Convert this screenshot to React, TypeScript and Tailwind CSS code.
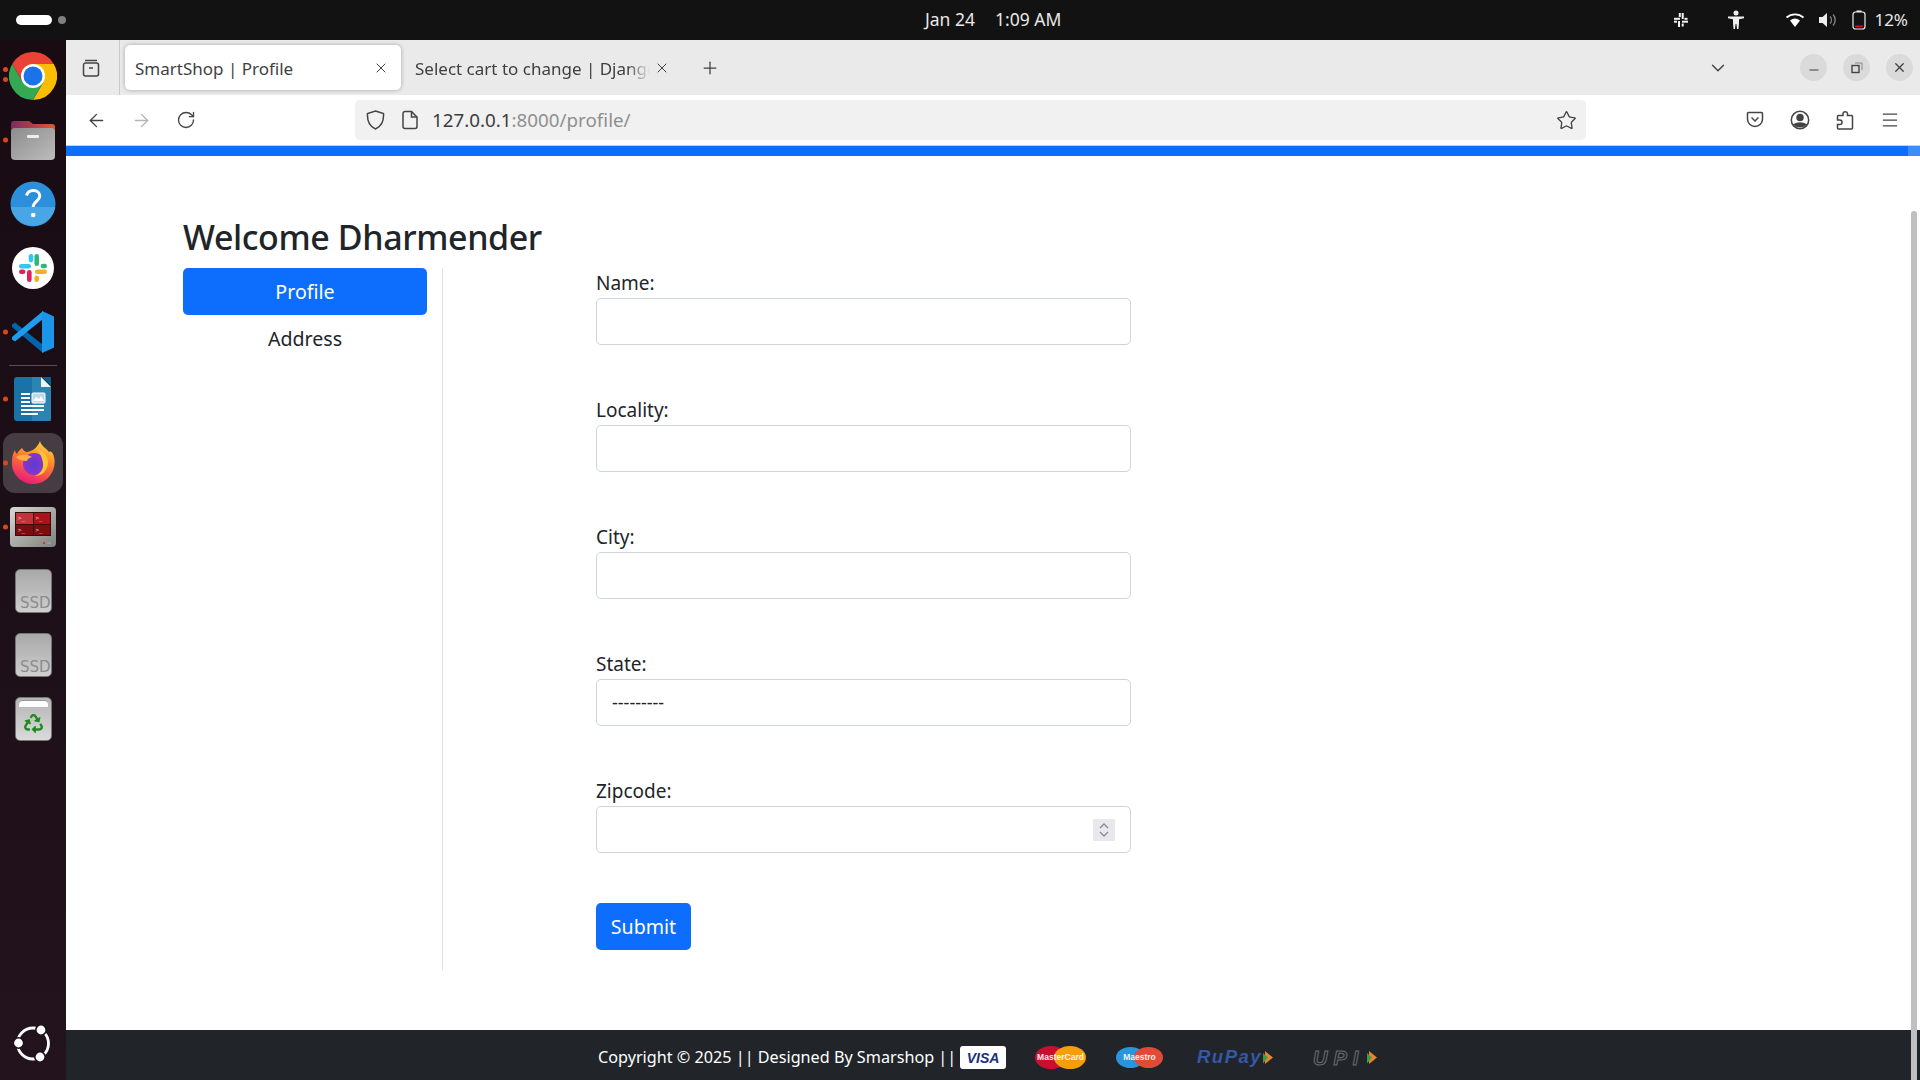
import React from "react";
import { ArrowLeft, ArrowRight, RotateCw, Star, X, Plus, ChevronDown, Minus, Menu } from "lucide-react";
import { FaRecycle } from "react-icons/fa";

const Dot = ({ y = "top-1/2" }: { y?: string }) => (
  <span className={`absolute left-[3px] ${y} -translate-y-1/2 w-[5px] h-[5px] rounded-full bg-[#d9481c]`} />
);

const Chrome = () => (
  <svg width="48" height="48" viewBox="0 0 48 48">
    <path d="M3.2 12A24 24 0 0 1 44.8 12L24 12L13.6 30Z" fill="#ea4335" />
    <path d="M44.8 12A24 24 0 0 1 24 48L34.4 30L24 12Z" fill="#fbbc04" />
    <path d="M24 48A24 24 0 0 1 3.2 12L13.6 30L34.4 30Z" fill="#34a853" />
    <circle cx="24" cy="24" r="12" fill="#fff" />
    <circle cx="24" cy="24" r="9.5" fill="#1a73e8" />
  </svg>
);
const Files = () => (
  <svg width="46" height="42" viewBox="0 0 46 42">
    <defs>
      <linearGradient id="ff" x1="0" x2="1"><stop offset="0" stopColor="#7d2a63" /><stop offset="1" stopColor="#e2582a" /></linearGradient>
      <linearGradient id="fg" x1="0" y1="0" x2="1" y2="1"><stop offset="0" stopColor="#8c8c8c" /><stop offset="1" stopColor="#bdbdbd" /></linearGradient>
    </defs>
    <path d="M1 5a3 3 0 0 1 3-3h15l4 3h19a3 3 0 0 1 3 3v14H1Z" fill="url(#ff)" />
    <rect x="1" y="9" width="44" height="32" rx="4" fill="url(#fg)" />
    <rect x="17" y="16" width="12" height="3" rx="1" fill="#eee" />
  </svg>
);
const Help = () => (
  <svg width="46" height="46" viewBox="0 0 46 46">
    <circle cx="23" cy="23" r="22.5" fill="#2b8fdc" />
    <path d="M.8 26h44.4A22.5 22.5 0 0 1 .8 26Z" fill="#49a6e6" />
    <path d="M16.5 14.5c1-3.5 3.6-5 6.7-5 4 0 6.6 2.3 6.6 5.6 0 5-6.6 5.2-6.6 11" fill="none" stroke="#fff" strokeWidth="3" />
    <circle cx="23.2" cy="34" r="2.3" fill="#fff" />
  </svg>
);
const SlackMark = ({ s = 28 }: { s?: number }) => {
  const c = ["#36c5f0", "#2eb67d", "#ecb22e", "#e01e5a"];
  return (
    <svg width={s} height={s} viewBox="0 0 28 28">
      <rect x="0" y="10" width="12" height="4.6" rx="2.3" fill={c[0]} />
      <rect x="9.7" y="0" width="4.6" height="8.4" rx="2.3" fill={c[0]} />
      <rect x="15.4" y="0" width="4.6" height="12" rx="2.3" fill={c[1]} />
      <rect x="21.6" y="9.7" width="6.4" height="4.6" rx="2.3" fill={c[1]} />
      <rect x="16" y="15.4" width="12" height="4.6" rx="2.3" fill={c[2]} />
      <rect x="15.4" y="21.6" width="4.6" height="6.4" rx="2.3" fill={c[2]} />
      <rect x="8" y="16" width="4.6" height="12" rx="2.3" fill={c[3]} />
      <rect x="0" y="15.4" width="6.4" height="4.6" rx="2.3" fill={c[3]} />
    </svg>
  );
};
const SlackMono = () => (
  <svg width="14" height="14" viewBox="0 0 14 14" fill="#f2f2f2">
    <rect x="0" y="4.8" width="6" height="2" /><rect x="4.8" y="0" width="2" height="4" />
    <rect x="7.700" y="0" width="2" height="6" /><rect x="10.500" y="4.800" width="3" height="2" />
    <rect x="8" y="7.700" width="6" height="2" /><rect x="7.700" y="10.500" width="2" height="3" />
    <rect x="4" y="8" width="2" height="6" /><rect x="0" y="7.700" width="3" height="2" />
  </svg>
);
const VSCode = () => (
  <svg width="44" height="44" viewBox="0 0 44 44">
    <path d="M1 14.500 4 12.500 32 35V43L1 17Z" fill="#0065a9" />
    <path d="M1 29.500 4 31.500 32 9V1L1 27Z" fill="#1f9cf0" />
    <path d="M31 1 43 6.500V37.500L31 43Z" fill="#1f9cf0" />
    <path d="M31 1 43 6.500V37.500L31 43Z" fill="#0a7fd0" opacity="0.25" />
  </svg>
);
const Writer = () => (
  <svg width="38" height="46" viewBox="0 0 38 46">
    <path d="M3 1h24l10 10v31a3 3 0 0 1-3 3H3a3 3 0 0 1-3-3V4a3 3 0 0 1 3-3Z" fill="#1a73a4" />
    <path d="M18 1h9l10 10v34H18Z" fill="#3a8fbd" opacity=".6" />
    <path d="M28 1l9 0v9Z" fill="#0e5d86" />
    <path d="M27 1l10 10H27Z" fill="#fff" opacity=".9" />
    <g fill="#fff">
      <rect x="7" y="17" width="9" height="2" /><rect x="7" y="21" width="9" height="2" /><rect x="7" y="25" width="9" height="2" />
      <rect x="7" y="29" width="23" height="2" /><rect x="7" y="33" width="23" height="2" /><rect x="7" y="37" width="17" height="2" />
    </g>
    <rect x="18" y="17" width="13" height="10" rx="1" fill="#bcd9ea" stroke="#fff" strokeWidth="1" />
    <path d="M19 25l3-4 3 2 2-3 3 5Z" fill="#fff" />
  </svg>
);
const Firefox = () => (
  <svg width="44" height="44" viewBox="0 0 44 44">
    <defs>
      <linearGradient id="fx" x1="0.7" y1="0" x2="0.3" y2="1"><stop offset="0" stopColor="#ffd43a" /><stop offset=".45" stopColor="#ff7a2e" /><stop offset="1" stopColor="#e8167c" /></linearGradient>
      <radialGradient id="fxb"><stop offset="0" stopColor="#5b3bd6" /><stop offset="1" stopColor="#8a35c7" /></radialGradient>
    </defs>
    <path d="M29 0c1 5 6 7 9 11 2-1 3 0 4 2 3 7 2 16-4 23-6 7-17 9-25 5C5 37 0 29 1 20c0-4 1-8 3-11 0 2 1 3 2 4 1-3 3-4 5-6 1 2 3 4 5 4 6-1 11-5 13-11Z" fill="url(#fx)" />
    <circle cx="23" cy="23" r="11" fill="url(#fxb)" />
    <path d="M5 16c5-3 11-3 16 0-3 1-5 2-5 4-4 0-8-1-11-4Z" fill="#ffb03a" />
    <path d="M26 8c7 2 12 8 11 15-1 7-6 12-13 12 5-2 9-7 8-13-1-6-3-10-6-14Z" fill="#ffc42e" />
  </svg>
);
const Pane = ({ tone }: { tone: string }) => (
  <div className={`${tone} flex flex-col justify-center pl-[2px] gap-[1px]`}>
    <span className="text-[6px] leading-[6px] text-white/80 font-['DejaVu_Sans_Mono',monospace]">&gt;_</span>
  </div>
);
const Terminal = () => (
  <div className="relative w-[46px] h-[40px] rounded-[4px] bg-gradient-to-br from-[#d8d8d4] to-[#7f827c] p-[5px] pb-[11px]">
    <div className="h-full bg-[#3a0a0c] grid grid-cols-2 grid-rows-2 gap-px p-px">
      <Pane tone="bg-[#c0343c]" /><Pane tone="bg-[#a8141a]" /><Pane tone="bg-[#7c0c10]" /><Pane tone="bg-[#7c0c10]" />
    </div>
    <span className="absolute right-[11px] bottom-[3px] w-[2px] h-[2px] bg-[#ff2020]" />
    <span className="absolute right-[5px] bottom-[3px] w-[4px] h-[2px] bg-[#9a9a96]" />
  </div>
);
const SSD = () => (
  <div className="relative w-[37px] h-[44px] rounded-[5px] bg-gradient-to-b from-[#a8a8a8] to-[#cfcfcf] border border-[#777] overflow-hidden">
    <span className="absolute right-0 bottom-[1px] text-[15px] leading-[16px] text-[#8c8c8c] font-['DejaVu_Sans',sans-serif]">SSD</span>
  </div>
);
const Trash = () => (
  <div className="relative w-[37px] h-[44px] rounded-[5px] bg-gradient-to-b from-[#b5b5b5] to-[#dadada] border border-[#777] flex items-center justify-center pt-[9px]">
    <span className="absolute top-[2px] left-[3px] right-[3px] h-[7px] rounded-t-[4px] bg-white border-t border-[#999]" />
    <FaRecycle size={19} color="#1f8a1f" />
  </div>
);
const Ubuntu = () => (
  <svg width="40" height="40" viewBox="0 0 40 40" fill="none">
    <circle cx="20" cy="19.500" r="15.500" stroke="#fff" strokeWidth="2.800" />
    <circle cx="5.500" cy="19" r="5.200" fill="#fff" stroke="#1d1018" strokeWidth="1.600" />
    <circle cx="28" cy="6" r="5.200" fill="#fff" stroke="#1d1018" strokeWidth="1.600" />
    <circle cx="27" cy="33" r="5.200" fill="#fff" stroke="#1d1018" strokeWidth="1.600" />
  </svg>
);

const DockItem = ({ children, dot, active, y }: { children: React.ReactNode; dot?: boolean; active?: boolean; y?: string }) => (
  <div className="relative h-[64px] w-[66px] flex items-center justify-center shrink-0">
    {active && <span className="absolute left-[3px] top-[2px] w-[60px] h-[60px] rounded-[12px] bg-[#453d42]" />}
    <span className="relative flex">{children}</span>
    {dot && <Dot y={y} />}
  </div>
);

const Field = ({ label, children }: { label: string; children: React.ReactNode }) => (
  <div className="mb-[50px]">
    <label className="block h-[30px] leading-[30px] text-[19px] text-[#212529]">{label}</label>
    {children}
  </div>
);
const inputCls = "block w-[535px] h-[47px] bg-white border border-[#ced4da] rounded-[5px] px-[15px] text-[18px] text-[#212529] outline-none";

const Visa = () => (
  <span className="w-[46px] h-[23px] bg-white rounded-[3px] flex items-center justify-center">
    <span className="text-[14px] leading-none font-bold italic text-[#1a2f7a] font-['Liberation_Sans',sans-serif]">VISA</span>
  </span>
);
const MC = ({ a, b, w, label, s, t }: { a: string; b: string; w: string; label: string; s: string; t: string }) => (
  <span className={`relative ${w} h-[24px] flex items-center`}>
    <span className={`absolute left-0 ${s} rounded-[50%]`} style={{ backgroundColor: a }} />
    <span className={`absolute right-0 ${s} rounded-[50%]`} style={{ backgroundColor: b }} />
    <span className={`absolute inset-0 flex items-center justify-center ${t} leading-none font-bold text-white/90 font-['Liberation_Sans',sans-serif] whitespace-nowrap overflow-hidden`}>{label}</span>
  </span>
);
const Arrow = () => (
  <svg width="12" height="15" viewBox="0 0 12 15" className="shrink-0">
    <path d="M3 1l8 6.500-8 6.500Z" fill="#e8842a" /><path d="M1 3l5 4.500-5 6Z" fill="#3f9a4a" />
  </svg>
);

export default function App() {
  return (
    <div className="w-[1920px] h-[1080px] overflow-hidden flex flex-col bg-white font-['Noto_Sans',sans-serif]">
      {/* system bar */}
      <header className="h-[40px] shrink-0 bg-[#121212] flex items-center pl-[16px] pr-[12px] text-white">
        <span className="w-[36px] h-[10px] rounded-full bg-white" />
        <span className="ml-[6px] w-[8px] h-[8px] rounded-full bg-[#808080]" />
        <div className="ml-[859px] -mt-px flex gap-[20px] text-[17.500px] text-[#e8e8e8]">
          <span>Jan 24</span>
          <span>1:09 AM</span>
        </div>
        <div className="ml-auto flex items-center">
          <SlackMono />
          <svg className="ml-[39px]" width="18" height="20" viewBox="0 0 18 20" fill="#eee">
            <circle cx="9" cy="3" r="2.500" /><path d="M1 6.500h16v1.800l-5 1V13l-.5 6H10l-.6-5h-.8L8 19H6.500L6 13V9.300l-5-1Z" />
          </svg>
          <svg className="ml-[40px]" width="20" height="16" viewBox="0 0 20 16" fill="none">
            <path d="M10 15 5 8.500a8 8 0 0 1 10 0Z" fill="#fff" /><path d="M1.500 5.500a13 13 0 0 1 17 0" stroke="#fff" strokeWidth="1.800" />
          </svg>
          <svg className="ml-[13px]" width="20" height="16" viewBox="0 0 20 16" fill="none">
            <path d="M1 5h3.500L9 1v14l-4.500-4H1Z" fill="#eee" /><path d="M12 4.500a5 5 0 0 1 0 7M15 2.500a8 8 0 0 1 0 11" stroke="#888" strokeWidth="1.300" />
          </svg>
          <svg className="ml-[14px]" width="14" height="20" viewBox="0 0 14 20" fill="none">
            <rect x="1" y="2" width="12" height="17" rx="2.500" stroke="#eee" strokeWidth="1.200" /><rect x="4.500" y="0.500" width="5" height="1.500" fill="#eee" /><rect x="3" y="15.500" width="8" height="1.600" fill="#d01010" />
          </svg>
          <span className="ml-[8px] -mt-px text-[17px] text-[#e8e8e8]">12%</span>
        </div>
      </header>

      <div className="flex-1 flex min-h-0">
        {/* dock */}
        <aside className="w-[66px] shrink-0 bg-gradient-to-b from-[#180b12] to-[#22131c] flex flex-col pt-[4px]">
          <div className="relative">
            <DockItem><Chrome /></DockItem>
            <span className="absolute left-[3px] top-[23px] w-[5px] h-[5px] rounded-full bg-[#d9481c]" />
            <span className="absolute left-[3px] top-[33px] w-[5px] h-[5px] rounded-full bg-[#d9481c]" />
          </div>
          <DockItem dot><Files /></DockItem>
          <DockItem><Help /></DockItem>
          <DockItem><SlackBadge /></DockItem>
          <DockItem dot><VSCode /></DockItem>
          <div className="mx-[9px] h-px my-px bg-[#5a4f55]" />
          <DockItem dot><Writer /></DockItem>
          <DockItem dot active><Firefox /></DockItem>
          <DockItem dot><Terminal /></DockItem>
          <DockItem><SSD /></DockItem>
          <DockItem><SSD /></DockItem>
          <DockItem><Trash /></DockItem>
          <div className="mt-auto mb-[4px]"><DockItem><Ubuntu /></DockItem></div>
        </aside>

        {/* browser */}
        <main className="relative flex-1 min-w-0 flex flex-col">
          {/* tab strip */}
          <div className="h-[55px] shrink-0 bg-[#eaeaea] flex items-center text-[#3f3f3f]">
            <div className="w-[54px] h-full border-r border-[#c9c9c9] flex items-center justify-center pr-[4px]">
              <svg width="20" height="20" viewBox="0 0 20 20" fill="none" stroke="#444" strokeWidth="1.500">
                <path d="M4 2.500h12" /><path d="M2.500 7a2 2 0 0 1 2-2h11a2 2 0 0 1 2 2v9a2 2 0 0 1-2 2h-11a2 2 0 0 1-2-2Z" /><path d="M8 10h4" />
              </svg>
            </div>
            <div className="ml-[5px] w-[276px] h-[45px] bg-white rounded-[5px] shadow-[0_0_4px_rgba(0,0,0,0.3)] flex items-center pl-[10px] pr-[12px]">
              <span className="text-[17px] mt-[2px] truncate">SmartShop | Profile</span>
              <X className="ml-auto" size={16} strokeWidth={1.500} />
            </div>
            <div className="ml-[14px] w-[235px] mt-[2px] overflow-hidden whitespace-nowrap text-[17px] [mask-image:linear-gradient(to_right,black_90%,transparent)]">
              Select cart to change | Django site admin
            </div>
            <X className="ml-[4px]" size={16} strokeWidth={1.500} />
            <Plus className="ml-[30px]" size={20} strokeWidth={1.500} />
            <ChevronDown className="ml-[987px]" size={22} strokeWidth={1.500} />
            <button className="ml-[71px] w-[27px] h-[27px] rounded-full bg-[#dadada] flex items-center justify-center"><Minus size={14} className="mt-[4px]" /></button>
            <button className="ml-[16px] w-[27px] h-[27px] rounded-full bg-[#dadada] flex items-center justify-center">
              <svg width="12" height="12" viewBox="0 0 12 12" fill="none" stroke="#444"><rect x="1" y="3.500" width="7" height="7" strokeWidth="1.400" /><path d="M4 1h7v7" stroke="#888" /></svg>
            </button>
            <button className="ml-[16px] w-[27px] h-[27px] rounded-full bg-[#dadada] flex items-center justify-center"><X size={15} strokeWidth={2} /></button>
          </div>

          {/* toolbar */}
          <div className="h-[51px] shrink-0 bg-white flex items-center text-[#444] border-b border-[#d0d0d0]">
            <ArrowLeft className="ml-[20px]" size={21} strokeWidth={1.600} />
            <ArrowRight className="ml-[24px] text-[#b5b5b5]" size={21} strokeWidth={1.600} />
            <RotateCw className="ml-[24px]" size={20} strokeWidth={1.600} />
            <div className="ml-[159px] w-[1231px] h-[40px] bg-[#f1f1f1] rounded-[5px] flex items-center pl-[11px] pr-[9px]">
              <svg width="19" height="20" viewBox="0 0 19 20" fill="none" stroke="#444" strokeWidth="1.500"><path d="M9.500 1 17.500 3.500c.5 8-2 13-8 15.500-6-2.500-8.500-7.500-8-15.500Z" /></svg>
              <svg className="ml-[17px]" width="16" height="20" viewBox="0 0 16 20" fill="none" stroke="#444" strokeWidth="1.500"><path d="M3 1.500h6.500L15 7v9.500a2 2 0 0 1-2 2H3a2 2 0 0 1-2-2v-13a2 2 0 0 1 2-2Z" /><path d="M9.500 1.500V7H15" /></svg>
              <span className="ml-[14px] text-[18.800px] text-[#3d3d3d]">127.0.0.1<span className="text-[#8f8f8f]">:8000/profile/</span></span>
              <Star className="ml-auto" size={21} strokeWidth={1.500} />
            </div>
            <svg className="ml-[160px]" width="18" height="18" viewBox="0 0 18 18" fill="none" stroke="#444" strokeWidth="1.500"><path d="M2.500 1.500h13a1 1 0 0 1 1 1V8a7.500 7.500 0 0 1-15 0V2.500a1 1 0 0 1 1-1Z" /><path d="M5.500 6.500 9 10l3.500-3.500" /></svg>
            <svg className="ml-[26px]" width="20" height="20" viewBox="0 0 20 20" fill="none" stroke="#444" strokeWidth="1.500"><circle cx="10" cy="10" r="8.700" /><circle cx="10" cy="7.500" r="3" fill="#444" /><path d="M4 14.500c3-2 9-2 12 0-3 3-9 3-12 0Z" fill="#444" /></svg>
            <svg className="ml-[26px]" width="18" height="20" viewBox="0 0 18 20" fill="none" stroke="#444" strokeWidth="1.500"><path d="M7 5.500V3.500a2.300 2.300 0 0 1 4.500 0v2h4a1 1 0 0 1 1 1V18a1 1 0 0 1-1 1H2.500a1 1 0 0 1-1-1v-3.500h2.300a2 2 0 0 0 0-4.500H1.500V6.500a1 1 0 0 1 1-1Z" /></svg>
            <Menu className="ml-[26px]" size={20} strokeWidth={1.500} />
          </div>

          {/* page */}
          <div className="h-[10px] shrink-0 bg-[#0d6efd]" />
          <div className="flex-1 min-h-0 pl-[117px] pt-[58px] flex flex-col">
            <h2 className="text-[34px] leading-[46px] tracking-[-0.4px] text-[#212529] font-medium mb-[8px]">Welcome Dharmender</h2>
            <div className="flex">
              <nav className="w-[260px] border-r border-[#dee2e6] pr-[15px] h-[702px] shrink-0">
                <a className="block h-[47px] leading-[47px] rounded-[5px] bg-[#0d6efd] text-white text-center text-[19.6px]">Profile</a>
                <a className="block h-[47px] leading-[47px] text-[#212529] text-center text-[19.6px]">Address</a>
              </nav>
              <form className="ml-[153px]">
                <Field label="Name:"><input className={inputCls} /></Field>
                <Field label="Locality:"><input className={inputCls} /></Field>
                <Field label="City:"><input className={inputCls} /></Field>
                <Field label="State:">
                  <select className={inputCls + " appearance-none"}><option>---------</option></select>
                </Field>
                <Field label="Zipcode:">
                  <div className="relative w-[535px]">
                    <input className={inputCls} />
                    <span className="absolute right-[16px] top-[13px] w-[22px] h-[22px] bg-[#e9e9ed] flex flex-col items-center justify-center text-[#8a8a8a]">
                      <svg width="12" height="16" viewBox="0 0 12 16" fill="none" stroke="currentColor" strokeWidth="1.300"><path d="M2 6l4-4 4 4M2 10l4 4 4-4" /></svg>
                    </span>
                  </div>
                </Field>
                <button type="button" className="block w-[95px] h-[47px] rounded-[5px] bg-[#0d6efd] text-white text-[19.6px]">Submit</button>
              </form>
            </div>
          </div>

          {/* footer */}
          <footer className="h-[50px] shrink-0 bg-[#212529] flex items-center pl-[532px] pt-[5px] text-white">
            <span className="text-[16.200px] whitespace-nowrap w-[362px]">Copyright © 2025 || Designed By Smarshop ||</span>
            <Visa />
            <span className="ml-[29px] flex"><MC a="#c8102e" b="#f59e0b" w="w-[51px]" s="w-[32px] h-[23px]" t="text-[8.500px]" label="MasterCard" /></span>
            <span className="ml-[30px] flex"><MC a="#2a95dc" b="#e24a38" w="w-[47px]" s="w-[29px] h-[21px]" t="text-[8.500px]" label="Maestro" /></span>
            <span className="ml-[34px] w-[78px] flex items-center">
              <span className="text-[18.500px] leading-none font-bold italic text-[#3558a8] font-['Liberation_Sans',sans-serif] tracking-[1.500px]">RuPay</span>
              <Arrow />
            </span>
            <span className="ml-[38px] w-[69px] flex items-center gap-[2px]">
              <span className="text-[20px] leading-none font-bold italic text-transparent [-webkit-text-stroke:1px_#6a6f75] font-['Liberation_Sans',sans-serif] tracking-[6px]">UPI</span>
              <Arrow />
            </span>
          </footer>

          {/* scrollbar */}
          <div className="absolute right-[3px] top-[171px] bottom-0 w-[6px] rounded-t-full bg-[#c0c0c0]" />
          <div className="absolute right-0 top-[106px] w-[12px] h-[10px] bg-white/20" />
        </main>
      </div>
    </div>
  );
}

const SlackBadge = () => (
  <span className="w-[42px] h-[42px] rounded-full bg-white flex items-center justify-center">
    <SlackMark s={28} />
  </span>
);
